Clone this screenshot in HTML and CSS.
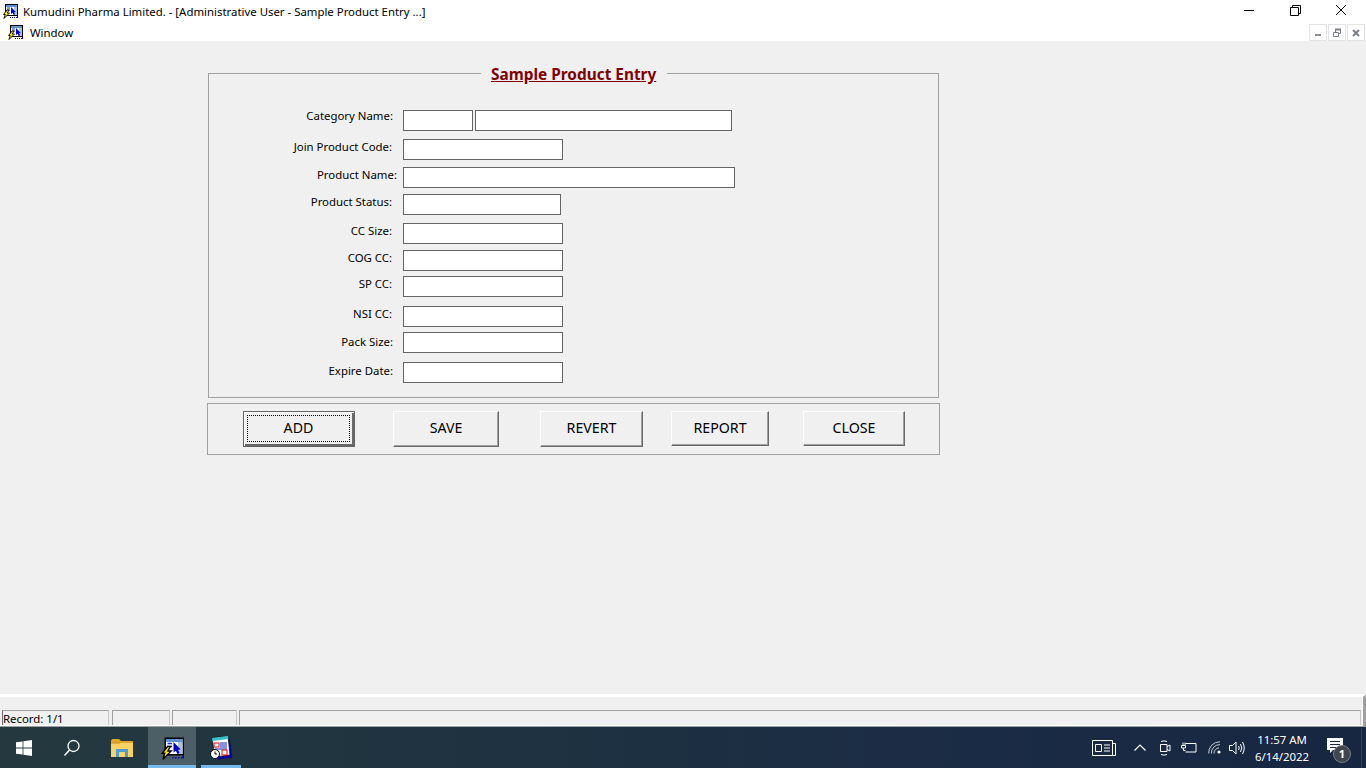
FILE: index.html
```html
<!DOCTYPE html>
<html>

	<head>
		<meta charset="UTF-8">
		<title>Kumudini Pharma Limited.</title>
		<link rel="stylesheet" href="styles.css">
	</head>

	<body>
		<svg class="defs" width="0" height="0">
			<symbol id="appicon" viewBox="0 0 16 16">
				<rect x="3" y="1" width="13" height="12" fill="#000"/>
				<rect x="4" y="2" width="11" height="10" fill="#fff"/>
				<rect x="4" y="2" width="11" height="2" fill="#5f93d0"/>
				<path d="M5 5 H8 M5 7 H8" stroke="#2030c0"/>
				<rect x="12" y="4" width="3" height="8" fill="#a8c8e8"/>
				<path d="M9 4 V11 L10.6 9.8 L11.6 12 L13 11.3 L12 9.2 L13.8 9 Z" fill="#0000d0"/>
				<path d="M5 7 L1.5 11.5 H3.2 L2 15.5 L7.5 10 H5.2 L7 7 Z" fill="#ffe800" stroke="#000" stroke-width=".9"/>
				<path d="M8 14.5 H16" stroke="#0000c0" stroke-dasharray="1 1"/>
				<path d="M15.5 13 V15" stroke="#0000c0"/>
			</symbol>
		</svg>

		<div class="titlebar">
			<svg class="appicon"><use href="#appicon"/></svg>
			<span class="titletext">Kumudini Pharma Limited. - [Administrative User - Sample Product Entry ...]</span>
			<div class="winbtns">
				<svg class="winbtn" viewBox="0 0 46 22"><path d="M18 10.5 H28" stroke="#000" fill="none"/></svg>
				<svg class="winbtn" viewBox="0 0 46 22"><path d="M18.5 7.5 H26.5 V15.5 H18.5 Z M20.5 7.5 V5.5 H28.5 V13.5 H26.5" stroke="#000" fill="none"/></svg>
				<svg class="winbtn" viewBox="0 0 46 22"><path d="M18 5 L28 15 M28 5 L18 15" stroke="#000" fill="none"/></svg>
			</div>
		</div>

		<div class="menubar">
			<svg class="appicon menuicon"><use href="#appicon"/></svg>
			<span class="menuitem">Window</span>
			<div class="mdibtns">
				<span class="mdibtn"><svg viewBox="0 0 16 15"><rect x="5" y="9" width="6" height="2" fill="#8a8f96"/></svg></span>
				<span class="mdibtn"><svg viewBox="0 0 16 15"><path d="M4.5 7.5 H9.5 V11.5 H4.5 Z M6.5 7 V4.5 H11.5 V8.5 H10" stroke="#7b8087" fill="none"/><path d="M6 4.5 H12" stroke="#7b8087" stroke-width="2"/></svg></span>
				<span class="mdibtn"><svg viewBox="0 0 16 15"><path d="M5 5 L11 11 M11 5 L5 11" stroke="#7b8087" stroke-width="2" fill="none"/></svg></span>
			</div>
		</div>

		<div class="content">
			<fieldset class="entry">
				<legend class="entry-title">Sample Product Entry</legend>
				<div class="fields">
					<label class="lbl lbl-up">Category Name:</label>
					<div class="inputs"><input class="w70" type="text"><input class="w257" type="text"></div>
					<label class="lbl lbl-in">Join Product Code:</label>
					<div class="inputs"><input class="w160" type="text"></div>
					<label class="lbl lbl-out">Product Name:</label>
					<div class="inputs"><input class="w332" type="text"></div>
					<label class="lbl lbl-in">Product Status:</label>
					<div class="inputs"><input class="w158" type="text"></div>
					<label class="lbl lbl-in">CC Size:</label>
					<div class="inputs"><input class="w160" type="text"></div>
					<label class="lbl lbl-in">COG CC:</label>
					<div class="inputs"><input class="w160" type="text"></div>
					<label class="lbl lbl-in">SP CC:</label>
					<div class="inputs"><input class="w160" type="text"></div>
					<label class="lbl lbl-in">NSI CC:</label>
					<div class="inputs"><input class="w160" type="text"></div>
					<label class="lbl lbl-pack">Pack Size:</label>
					<div class="inputs"><input class="w160" type="text"></div>
					<label class="lbl lbl-expire">Expire Date:</label>
					<div class="inputs"><input class="w160" type="text"></div>
				</div>
			</fieldset>

			<div class="actions">
				<button class="btn btn-add" type="button"><span class="focus">ADD</span></button>
				<button class="btn btn-save" type="button">SAVE</button>
				<button class="btn btn-revert" type="button">REVERT</button>
				<button class="btn btn-report" type="button">REPORT</button>
				<button class="btn btn-close" type="button">CLOSE</button>
			</div>
		</div>

		<div class="statusbar">
			<div class="cell cell-record">Record: 1/1</div>
			<div class="cell cell-a"></div>
			<div class="cell cell-b"></div>
			<div class="cell cell-rest"></div>
		</div>

		<div class="taskbar">
			<div class="tb tb-start">
				<svg width="16" height="16" viewBox="0 0 16 16"><path d="M0 2.3 L6.6 1.4 V7.6 H0 Z M7.4 1.3 L16 0 V7.6 H7.4 Z M0 8.4 H6.6 V14.6 L0 13.7 Z M7.4 8.4 H16 V16 L7.4 14.7 Z" fill="#fff"/></svg>
			</div>
			<div class="tb tb-search">
				<svg width="18" height="18" viewBox="0 0 18 18"><circle cx="10.5" cy="7" r="5.5" stroke="#fff" stroke-width="1.3" fill="none"/><path d="M6.5 11 L1.5 16.5" stroke="#fff" stroke-width="1.5"/></svg>
			</div>
			<div class="tb tb-folder">
				<svg width="22" height="18" viewBox="0 0 22 18"><path d="M0 2 Q0 0 2 0 H8 L10 2 H22 V18 H0 Z" fill="#e0a526"/><rect x="0" y="4" width="22" height="14" fill="#fad261"/><rect x="0" y="3.5" width="9" height="1" fill="#c98d14"/><path d="M5 18 V10 H17 V18 H14 V13 H8 V18 Z" fill="#4a9ed8"/></svg>
			</div>
			<div class="tb tb-active">
				<svg class="tbicon"><use href="#appicon"/></svg>
			</div>
			<div class="tb tb-running">
				<svg class="tbicon" viewBox="0 0 24 24">
					<path d="M3 2 L19 0 L22 20 L8 22 Z" fill="#0000a0" transform="translate(1.5 1.5)"/>
					<path d="M3 2 L19 0 L21 19 L6 21 Z" fill="#fff" stroke="#000" stroke-width=".7"/>
					<path d="M3 2 L19 0 L19.4 3 L3.4 5 Z" fill="#35c0c8"/>
					<rect x="5" y="7" width="5" height="4" fill="none" stroke="#e01010"/>
					<path d="M11 7 H18 M11 9 H18 M11 11 H18 M6 13 H18" stroke="#1020c0"/>
					<rect x="13" y="14" width="5" height="5" fill="none" stroke="#e01010"/>
					<circle cx="6" cy="18" r="4.5" fill="#fff" stroke="#000"/>
					<path d="M6 15.5 V18 H8" stroke="#000" fill="none"/>
				</svg>
			</div>

			<div class="tray">
				<svg class="ti ti-news" width="24" height="16" viewBox="0 0 24 16"><path d="M.5 .5 H20.5 V15.5 H.5 Z M20.5 3.5 H23.5 V15.5 H20.5 M3.5 4.5 H9.5 V11.5 H3.5 Z M12 5 H18 M12 8 H18 M12 11 H18" stroke="#fff" fill="none"/></svg>
				<svg class="ti ti-chev" width="12" height="7" viewBox="0 0 12 7"><path d="M.5 6.5 L6 1 L11.5 6.5" stroke="#fff" stroke-width="1.2" fill="none"/></svg>
				<svg class="ti ti-meet" width="12" height="16" viewBox="0 0 12 16"><path d="M1.5 4.5 H8 V11.5 H1.5 Z M8 6.5 L11 5 V11 L8 9.5 M2 1.5 Q5 .2 8 1.5 M2 14.5 Q5 15.8 8 14.5" stroke="#fff" fill="none"/></svg>
				<svg class="ti ti-power" width="16" height="11" viewBox="0 0 16 11"><path d="M4.5 1.5 H15 V10 H4.5 M2 .5 V3 M4 .5 V3 M.5 3.5 H4.5 V6 H.5 Z M2.5 6 V8.5 H4.5" stroke="#fff" fill="none"/></svg>
				<svg class="ti ti-wifi" width="14" height="13" viewBox="0 0 14 13"><path d="M.7 12.5 A11 11 0 0 1 12 .8 M3.3 12.5 A8.5 8.5 0 0 1 12 3.6 M6 12.5 A5.5 5.5 0 0 1 11 6.8" stroke="#c8ccd2" fill="none"/><circle cx="11" cy="11" r="1.6" fill="#fff"/></svg>
				<svg class="ti ti-vol" width="16" height="14" viewBox="0 0 16 14"><path d="M.5 4.5 H3.5 L7 1 V13 L3.5 9.5 H.5 Z M9.5 5 Q11 7 9.5 9 M11.5 3 Q14 7 11.5 11 M13.5 1 Q17 7 13.5 13" stroke="#fff" fill="none"/></svg>
				<div class="clock"><div>11:57 AM</div><div>6/14/2022</div></div>
				<div class="notify">
					<svg width="16" height="16" viewBox="0 0 16 16"><path d="M0 0 H16 V12 H6 L3 15 V12 H0 Z" fill="#fff"/><path d="M3 3.5 H13 M3 6.5 H13 M3 9.5 H9" stroke="#1a2b45"/></svg>
					<span class="badge">1</span>
				</div>
			</div>
		</div>
	</body>

</html>
```
FILE: styles.css
```css
* {
	box-sizing: border-box;
}

html, body {
	margin: 0;
	padding: 0;
}

body {
	width: 1366px;
	height: 768px;
	overflow: hidden;
	display: flex;
	flex-direction: column;
	background-color: #f0f0f0;
	font-family: "Noto Sans", "Open Sans", sans-serif;
	font-size: 11.4px;
	color: #000;
}

.defs {
	position: absolute;
}

.titlebar {
	height: 22px;
	display: flex;
	align-items: center;
	background-color: #fff;
	padding-left: 2px;
}

.appicon {
	width: 16px;
	height: 16px;
	flex: none;
}

.titletext {
	margin-left: 5px;
}

.winbtns {
	margin-left: auto;
	padding-right: 2px;
	display: flex;
}

.winbtn {
	width: 46px;
	height: 22px;
}

.menubar {
	height: 19px;
	display: flex;
	align-items: center;
	background-color: #fff;
	padding-left: 7px;
}

.menuitem {
	margin-left: 7px;
	padding-top: 1px;
}

.mdibtns {
	margin-left: auto;
	display: flex;
	gap: 1px;
	padding-right: 1px;
	padding-top: 2px;
}

.mdibtn {
	width: 18px;
	height: 17px;
	border: 1px solid #e3e3e3;
	display: flex;
	align-items: center;
	justify-content: center;
}

.mdibtn svg {
	width: 16px;
	height: 15px;
}

.content {
	flex: 1;
	padding-left: 207px;
	padding-top: 22px;
}

.entry {
	width: 731px;
	height: 335px;
	margin: 0 0 5px 1px;
	padding: 0;
	border: 1px solid #a0a0a0;
}

/* legend sits on the border, text hangs a little below the line */
.entry-title {
	position: relative;
	top: 1px;
	margin-left: 272px;
	padding: 0 11px 0 10px;
	height: 21px;
	line-height: 21px;
	font-size: 15.4px;
	font-weight: bold;
	color: #800000;
	text-decoration: underline;
}

.fields {
	display: grid;
	grid-template-columns: 194px auto;
	grid-template-rows: 29px 28px 27px 29px 27px 26px 30px 26px 30px 21px;
	margin-top: 26px;
}

.lbl {
	text-align: right;
	padding-right: 10px;
	line-height: 16px;
}

.lbl-up {
	margin-top: -2px;
}

.lbl-in {
	padding-right: 11px;
}

.lbl-out {
	padding-right: 6px;
}

.lbl-pack {
	margin-top: 2px;
}

.lbl-expire {
	margin-top: 1px;
}

.inputs {
	display: flex;
	gap: 2px;
}

input {
	height: 21px;
	border: 1px solid #646464;
	background-color: #fff;
	padding: 0 2px;
	margin: 0;
	outline: none;
}

.w70 { width: 70px; }
.w158 { width: 158px; }
.w160 { width: 160px; }
.w257 { width: 257px; }
.w332 { width: 332px; }

.actions {
	width: 733px;
	height: 52px;
	border: 1px solid #a0a0a0;
	display: flex;
	align-items: flex-start;
	padding: 7px 0 0 35px;
}

.btn {
	height: 35px;
	padding: 0 0 2px;
	font-family: inherit;
	font-size: 14.2px;
	color: #000;
	background-color: #f0f0f0;
	border: 1px solid;
	border-color: #fff #696969 #696969 #fff;
	box-shadow: inset -1px -1px 0 #a0a0a0;
}

.btn-add {
	width: 112px;
	height: 36px;
	border: 1px solid #646464;
	box-shadow: inset 1px 1px 0 #fff, inset -2px -2px 0 #696969;
	padding: 3px 4px 4px 3px;
}

.focus {
	display: flex;
	align-items: center;
	justify-content: center;
	height: 100%;
	padding-bottom: 2px;
	border: 1px dotted #000;
}

.btn-save {
	width: 106px;
	height: 36px;
	padding-bottom: 3px;
	margin-left: 38px;
}

.btn-revert {
	width: 103px;
	height: 36px;
	padding-bottom: 3px;
	margin-left: 41px;
}

.btn-report {
	width: 98px;
	margin-left: 28px;
}

.btn-close {
	width: 102px;
	margin-left: 34px;
}

.statusbar {
	height: 33px;
	border-top: 3px solid #fff;
	border-bottom: 1px solid #a0a0a0;
	border-right: 3px solid #a0a0a0;
	box-shadow: inset -1px -1px 0 #fff;
	display: flex;
	align-items: flex-end;
	gap: 2px;
	padding: 0 2px 1px 2px;
}

.cell {
	height: 15px;
	border-top: 1px solid #a0a0a0;
	border-left: 1px solid #a0a0a0;
	border-right: 1px solid #c8c8c8;
	font-size: 11.4px;
	line-height: 15px;
}

.cell-record {
	width: 107px;
	margin-right: 1px;
	border-left-color: #6e6e6e;
}

.cell-a { width: 58px; }
.cell-b { width: 65px; }
.cell-rest { flex: 1; }

.taskbar {
	height: 41px;
	display: flex;
	align-items: stretch;
	background: linear-gradient(90deg, #24393f 0, #20353f 300px, #1a2b45 1000px, #172742 100%);
	color: #fff;
}

.tb {
	display: flex;
	align-items: center;
	justify-content: center;
	width: 48px;
}

.tb-folder {
	width: 52px;
}

.tb-active {
	background-color: #4d5f66;
	border-bottom: 3px solid #76b9ed;
	padding-top: 3px;
}

.tb-running {
	width: 40px;
	margin-left: 5px;
	border-bottom: 3px solid #76b9ed;
	padding-top: 3px;
}

.tbicon {
	width: 24px;
	height: 24px;
}

.tray {
	margin-left: auto;
	display: flex;
	align-items: center;
	padding-right: 4px;
}

.ti {
	flex: none;
}

.ti-news { margin-right: 18px; }
.ti-chev { margin-right: 13px; }
.ti-meet { margin-right: 10px; }
.ti-power { margin-right: 11px; }
.ti-wifi { margin-right: 7px; }
.ti-vol { margin-right: 6px; }

.clock {
	width: 62px;
	text-align: center;
	font-size: 11.4px;
	line-height: 17px;
}

.notify {
	position: relative;
	width: 24px;
	height: 24px;
	margin-left: 14px;
	margin-right: 11px;
	padding-top: 2px;
}

.notify::after {
	content: "";
	position: absolute;
	right: -11px;
	top: -8px;
	height: 41px;
	border-right: 1px solid #33445c;
}

.badge {
	position: absolute;
	left: 6px;
	top: 9px;
	width: 18px;
	height: 18px;
	border-radius: 50%;
	background-color: #3f4650;
	border: 1px solid #7a7f86;
	font-size: 11px;
	font-weight: bold;
	line-height: 16px;
	text-align: center;
}
```
